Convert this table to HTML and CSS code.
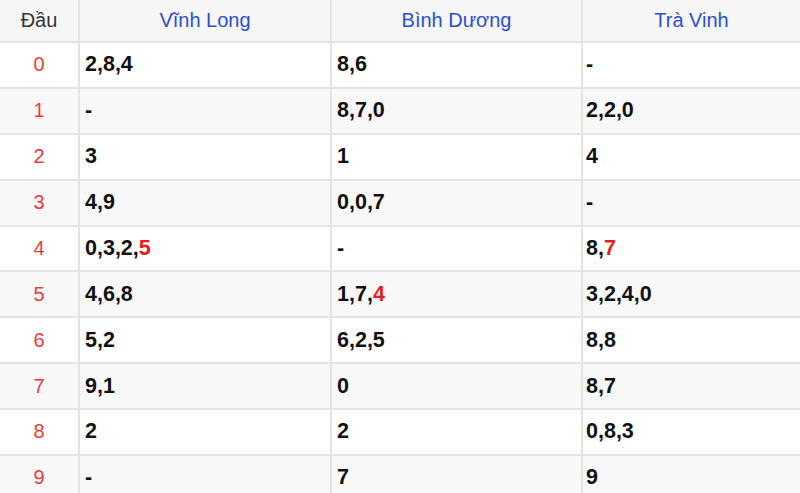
FILE: index.html
```html
<!DOCTYPE html>
<html lang="vi">
<head>
<meta charset="utf-8">
<title>Lô tô đầu</title>
<link rel="stylesheet" href="styles.css">
</head>
<body>
<div class="table">
  <div class="cell head first">Đầu</div>
  <div class="cell head">Vĩnh Long</div>
  <div class="cell head">Bình Dương</div>
  <div class="cell head">Trà Vinh</div>

  <div class="cell idx">0</div><div class="cell val">2,8,4</div><div class="cell val">8,6</div><div class="cell val last">-</div>
  <div class="cell idx alt">1</div><div class="cell val alt">-</div><div class="cell val alt">8,7,0</div><div class="cell val last alt">2,2,0</div>
  <div class="cell idx">2</div><div class="cell val">3</div><div class="cell val">1</div><div class="cell val last">4</div>
  <div class="cell idx alt">3</div><div class="cell val alt">4,9</div><div class="cell val alt">0,0,7</div><div class="cell val last alt">-</div>
  <div class="cell idx">4</div><div class="cell val">0,3,2,<span class="hot">5</span></div><div class="cell val">-</div><div class="cell val last">8,<span class="hot">7</span></div>
  <div class="cell idx alt">5</div><div class="cell val alt">4,6,8</div><div class="cell val alt">1,7,<span class="hot">4</span></div><div class="cell val last alt">3,2,4,0</div>
  <div class="cell idx">6</div><div class="cell val">5,2</div><div class="cell val">6,2,5</div><div class="cell val last">8,8</div>
  <div class="cell idx alt">7</div><div class="cell val alt">9,1</div><div class="cell val alt">0</div><div class="cell val last alt">8,7</div>
  <div class="cell idx">8</div><div class="cell val">2</div><div class="cell val">2</div><div class="cell val last">0,8,3</div>
  <div class="cell idx alt">9</div><div class="cell val alt">-</div><div class="cell val alt">7</div><div class="cell val last alt">9</div>
</div>
</body>
</html>
```

FILE: styles.css
```css
html, body {
  margin: 0;
  padding: 0;
  background: #ffffff;
  overflow: hidden;
}
body {
  width: 800px;
  height: 493px;
  font-family: "Liberation Sans", Arial, sans-serif;
}
.table {
  display: grid;
  grid-template-columns: 78px 250px 249px 1fr;
  grid-template-rows: 41px repeat(10, 43.875px);
  column-gap: 2px;
  row-gap: 2px;
  background: #e4e4e4;
}
.cell {
  display: flex;
  align-items: center;
  background: #ffffff;
  white-space: nowrap;
}
.cell.alt {
  background: #f8f8f8;
}
.head {
  justify-content: center;
  background: #f6f6f6;
  color: #2c4fcf;
  font-size: 20px;
}
.head.first {
  color: #333333;
}
.idx {
  justify-content: center;
  color: #ee3a3a;
  font-size: 20px;
}
.val {
  padding-left: 5px;
  color: #111111;
  font-size: 21.5px;
  font-weight: bold;
}
.val.last {
  padding-left: 3px;
}
.hot {
  color: #e81c1c;
}
```
